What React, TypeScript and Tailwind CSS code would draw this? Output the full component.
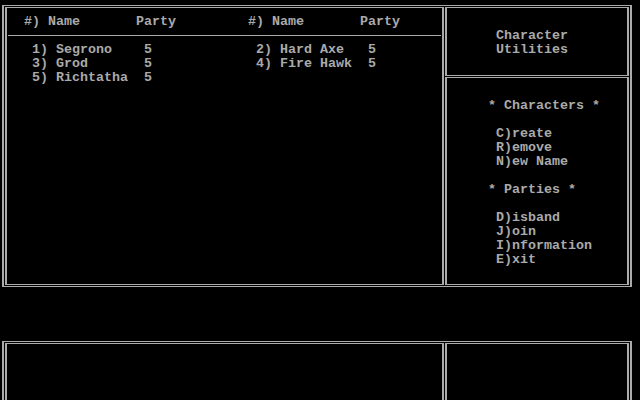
const rows = [
  "   1) Segrono    5             2) Hard Axe   5",
  "   3) Grod       5             4) Fire Hawk  5",
  "   5) Richtatha  5",
];

const menu = [
  "     * Characters *",
  "",
  "      C)reate",
  "      R)emove",
  "      N)ew Name",
  "",
  "     * Parties *",
  "",
  "      D)isband",
  "      J)oin",
  "      I)nformation",
  "      E)xit",
];

function Line({ text }: { text: string }) {
  return <div className="h-[14px] whitespace-pre">{text || " "}</div>;
}

export default function App() {
  return (
    <main
      className="w-[640px] h-[400px] overflow-hidden bg-black pt-[5px] pl-[2px] text-[#aaaaaa] text-[13.3333px] leading-[14px] font-bold"
      style={{ fontFamily: '"Liberation Mono", "DejaVu Sans Mono", monospace' }}
    >
      {/* top frame */}
      <div className="w-[630px] h-[282px] border-x-2 border-y border-[#aaaaaa] p-px flex gap-px">
        <div className="w-[439px] h-full border-x-2 border-y border-[#aaaaaa] pt-[7px] pl-px">
          <Line text="  #) Name       Party         #) Name       Party" />
          <div className="h-[14px] pt-[6px] pr-px">
            <div className="h-px bg-[#aaaaaa]" />
          </div>
          {rows.map((r, i) => (
            <Line key={i} text={r} />
          ))}
        </div>
        <div className="flex-1 flex flex-col gap-px">
          <div className="h-[69px] border-x-2 border-y border-[#aaaaaa] pt-[21px] pl-px">
            <Line text="      Character" />
            <Line text="      Utilities" />
          </div>
          <div className="flex-1 border-x-2 border-y border-[#aaaaaa] pt-[21px] pl-px">
            {menu.map((m, i) => (
              <Line key={i} text={m} />
            ))}
          </div>
        </div>
      </div>

      {/* bottom frame */}
      <div className="mt-[54px] w-[630px] h-[120px] border-x-2 border-y border-[#aaaaaa] p-px flex gap-px">
        <div className="w-[439px] h-full border-x-2 border-y border-[#aaaaaa]" />
        <div className="flex-1 h-full border-x-2 border-y border-[#aaaaaa]" />
      </div>
    </main>
  );
}
